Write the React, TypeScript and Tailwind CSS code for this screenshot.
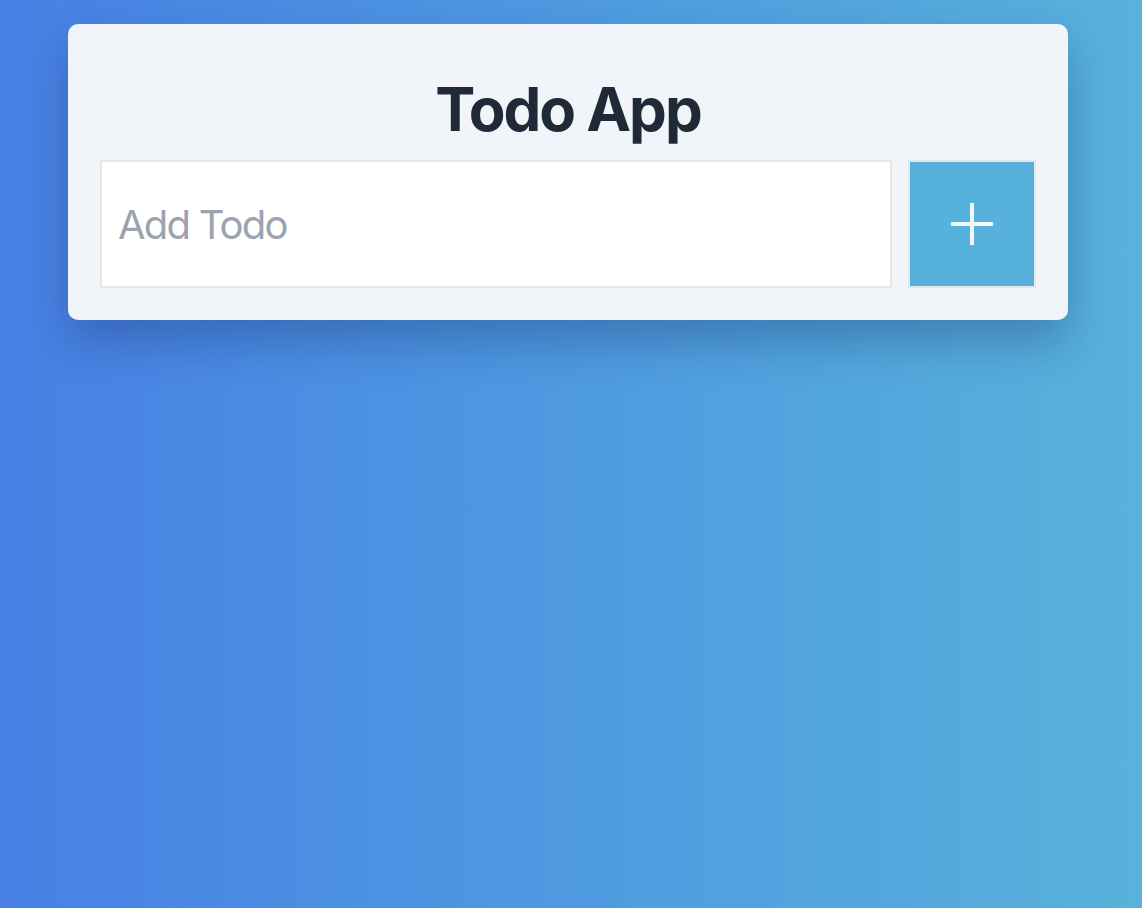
import React, { useState } from "react";

export default function App() {
  const [todo, setTodo] = useState("");

  return (
    <div
      className="min-h-screen w-full bg-linear-to-r from-[#4880e5] to-[#58b2db] pt-6 pl-[68px]"
      style={{ fontFamily: "Inter, 'Noto Sans', sans-serif" }}
    >
      <div className="w-[1000px] rounded-[10px] bg-[#f1f5f9] px-8 pt-[55px] pb-8 shadow-[0_22px_44px_rgba(15,40,90,0.3)]">
        <h1 className="mb-[21px] text-center text-6xl leading-[60px] font-bold tracking-[-2px] text-[#1f2937]">
          Todo App
        </h1>
        <div className="flex gap-4">
          <input
            className="h-32 flex-1 border-2 border-[#e5e7eb] bg-white px-4 text-[40px] tracking-[-1.8px] text-gray-800 outline-none placeholder:text-[#9ca3af]"
            type="text"
            placeholder="Add Todo"
            value={todo}
            onChange={(e) => setTodo(e.target.value)}
          />
          <button className="flex h-32 w-32 items-center justify-center border-2 border-[#e5e7eb] bg-[#56b1dc]">
            <svg width="42" height="42" viewBox="0 0 42 42">
              <path d="M21 0v42M0 21h42" stroke="#f3f6fa" strokeWidth="4" />
            </svg>
          </button>
        </div>
      </div>
    </div>
  );
}
